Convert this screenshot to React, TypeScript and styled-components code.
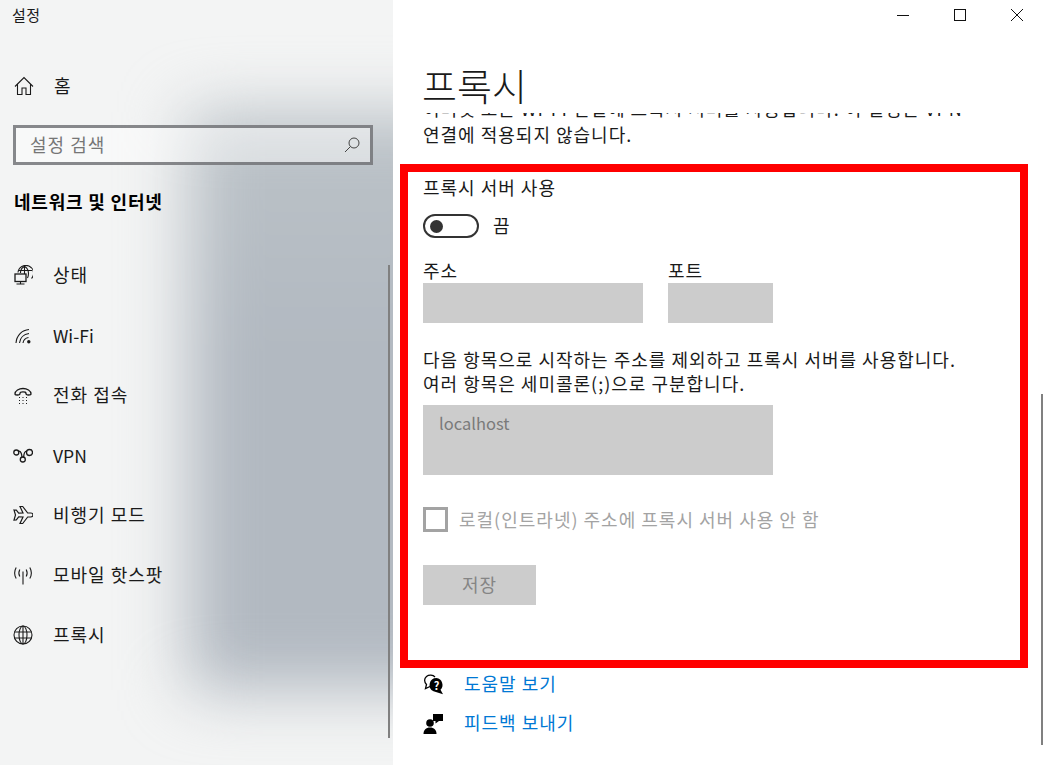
import React from 'react';
import styled, { createGlobalStyle } from 'styled-components';

const GlobalStyle = createGlobalStyle`
  html, body {
    margin: 0;
    padding: 0;
    background: #fff;
    overflow: hidden;
  }
  * {
    box-sizing: border-box;
  }
  body {
    font-family: "Noto Sans CJK KR", "Noto Sans", sans-serif;
    color: #1a1a1a;
    font-size: 18px;
    letter-spacing: 1px;
  }
`;

const Window = styled.div`
  display: grid;
  grid-template-columns: 393px 1fr;
  width: 1043px;
  height: 765px;
  overflow: hidden;
`;

const Sidebar = styled.aside`
  position: relative;
  height: 765px;
  overflow: hidden;
  background: #f3f4f4;
`;

// the blurred desktop wallpaper seen through the acrylic pane
const Acrylic = styled.div`
  position: absolute;
  left: 188px;
  top: 112px;
  width: 280px;
  height: 578px;
  background: linear-gradient(#bcc3c8, #b2b9c1 40%, #b2b9c1);
  filter: blur(32px);
`;

const SidebarBody = styled.div`
  position: relative;
  display: flex;
  flex-direction: column;
  height: 100%;
`;

const AppTitle = styled.div`
  padding: 5px 0 0 12px;
  height: 56px;
  font-size: 15px;
  letter-spacing: 0.4px;
  line-height: 20px;
`;

// Noto sits a little lower than the reference's font next to icons
const Label = styled.span`
  margin-top: -2px;
`;

const HomeRow = styled.div`
  display: flex;
  align-items: center;
  gap: 20px;
  height: 60px;
  padding-left: 14px;
`;

const SearchBox = styled.div`
  display: flex;
  align-items: center;
  justify-content: space-between;
  margin: 9px 0 0 13px;
  width: 360px;
  height: 40px;
  padding: 0 10px 0 14px;
  border: 3px solid rgba(90, 92, 96, 0.72);
  background: rgba(255, 255, 255, 0.45);
  color: #767676;
`;

const SectionTitle = styled.div`
  margin: 24px 0 0 14px;
  height: 26px;
  letter-spacing: 0.8px;
  line-height: 24px;
  font-weight: 700;
  color: #000;
`;

const NavList = styled.nav`
  display: flex;
  flex-direction: column;
  margin-top: 30px;
`;

const NavItem = styled.div`
  display: flex;
  align-items: center;
  gap: 20px;
  height: 60px;
  padding-left: 13px;
`;

const LatinLabel = styled.span`
  font-size: 17.5px;
  letter-spacing: 0;
`;

const NavIcon = styled.svg`
  flex: none;
  width: 20px;
  height: 20px;
  fill: none;
  stroke: #1a1a1a;
  stroke-width: 1.1;
`;

const Scrollbar = styled.div<{ $left: number; $top: number; $height: number }>`
  position: absolute;
  left: ${(p) => p.$left}px;
  top: ${(p) => p.$top}px;
  width: 2px;
  height: ${(p) => p.$height}px;
  background: #808080;
`;

const Main = styled.main`
  position: relative;
  display: flex;
  flex-direction: column;
  padding-left: 7px;
  height: 765px;
  overflow: hidden;
  background: #fff;
`;

const TitleBar = styled.div`
  display: flex;
  justify-content: flex-end;
  height: 30px;
  padding-right: 19px;
  margin-left: -7px;
`;

const WinButton = styled.svg`
  width: 14px;
  height: 14px;
  margin: 8px 0 0 43px;
  fill: none;
  stroke: #111;
  stroke-width: 1;
`;

const PageTitle = styled.h1`
  margin: 30px 0 0 22px;
  height: 53px;
  font-size: 38px;
  letter-spacing: 0;
  line-height: 50px;
  font-weight: 300;
  color: #1a1a1a;
`;

const ClippedLine = styled.div`
  display: flex;
  align-items: flex-end;
  height: 7px;
  margin-left: 23px;
  overflow: hidden;
  line-height: 24px;
  white-space: nowrap;
`;

const Intro = styled.p`
  margin: 1px 0 0 23px;
  height: 33px;
  line-height: 26px;
`;

const RedFrame = styled.section`
  display: flex;
  flex-direction: column;
  width: 628px;
  height: 504px;
  margin-top: 10px;
  padding: 3px 0 0 15px;
  border: 8px solid #ff0000;
`;

const FieldTitle = styled.div`
  height: 24px;
  line-height: 24px;
`;

const ToggleRow = styled.div`
  display: flex;
  align-items: center;
  gap: 14px;
  height: 24px;
  margin-top: 15px;
`;

const ToggleTrack = styled.div`
  display: flex;
  align-items: center;
  width: 56px;
  height: 24px;
  padding-left: 5px;
  border: 2px solid #333;
  border-radius: 12px;
`;

const ToggleKnob = styled.div`
  width: 13px;
  height: 13px;
  border-radius: 50%;
  background: #333;
`;

const AddressRow = styled.div`
  display: flex;
  gap: 25px;
  margin-top: 20px;
`;

const FieldLabel = styled.div`
  height: 25px;
  line-height: 24px;
`;

const DisabledInput = styled.div<{ $width: number; $height: number }>`
  width: ${(p) => p.$width}px;
  height: ${(p) => p.$height}px;
  padding: 5px 16px;
  background: #cccccc;
  color: #7a7a7a;
  font-size: 16.5px;
  letter-spacing: 0;
  line-height: 26px;
`;

const Description = styled.p`
  margin: 24px 0 0;
  line-height: 24px;
  white-space: nowrap;
`;

const TextAreaBox = styled(DisabledInput)`
  margin-top: 10px;
`;

const CheckRow = styled.div`
  display: flex;
  align-items: center;
  gap: 11px;
  margin-top: 32px;
  color: #a3a3a3;
  white-space: nowrap;
`;

const CheckBox = styled.div`
  flex: none;
  width: 25px;
  height: 25px;
  border: 3px solid #a3a3a3;
`;

const SaveButton = styled.div`
  display: flex;
  align-items: center;
  justify-content: center;
  width: 113px;
  height: 40px;
  margin-top: 33px;
  background: #cccccc;
  color: #858585;
`;

const HelpLinks = styled.div`
  display: flex;
  flex-direction: column;
  gap: 9px;
  margin: 1px 0 0 23px;
`;

const HelpLink = styled.a`
  display: flex;
  align-items: center;
  gap: 20px;
  height: 30px;
  color: #0078d4;
`;

const HelpIcon = styled.svg`
  flex: none;
  width: 21px;
  height: 21px;
  fill: #000;
`;

const navItems: { label: string; latin?: boolean; icon: React.ReactNode }[] = [
  {
    label: '상태',
    icon: (
      <>
        <path d="M5 7.500A7.800 7.800 0 1 1 18.500 13.500" />
        <path d="M5.500 5.500h13.500M7.500 8V7c.3-2.500 1.500-4.500 4-5.800C14.500 3 15.500 6 15.500 8.500c0 1.500-.3 3-1 4.500M11.500 1.200V9" />
        <rect x="2" y="9" width="11" height="7.500" fill="#f3f4f4" strokeWidth="1.300" />
        <path d="M7.500 16.500v2.500M3.500 19h8" />
      </>
    ),
  },
  {
    label: 'Wi-Fi',
    latin: true,
    icon: (
      <>
        <path d="M3 18C3.500 10.500 9 5 16 4.500" />
        <path d="M6.500 18c.5-5 4.200-8.800 9.500-9.500" />
        <path d="M10 18c.4-2.800 2.500-5 5.500-5.500" />
        <circle cx="15.800" cy="16.700" r="1.700" fill="#1a1a1a" stroke="none" />
      </>
    ),
  },
  {
    label: '전화 접속',
    icon: (
      <>
        <path
          d="M2 9C2 5.500 6 3.500 10 3.500s8 2 8 5.500c0 1-1 1-2.500 1s-2.500 0-2.500-1.500C13 7.200 12 6.800 10 6.800S7 7.200 7 8.500C7 10 6 10 4.500 10S2 10 2 9z"
          strokeWidth="1.300"
        />
        <path
          d="M6 12.500h1M9.500 12.500h1M13 12.500h1M6 15.500h1M9.500 15.500h1M13 15.500h1M6 18.500h1M9.500 18.500h1M13 18.500h1"
          strokeWidth="1.200"
        />
      </>
    ),
  },
  {
    label: 'VPN',
    latin: true,
    icon: (
      <g strokeWidth="1.300">
        <circle cx="3.300" cy="7.500" r="2.500" />
        <circle cx="16.500" cy="7.500" r="3" />
        <circle cx="9.800" cy="14.500" r="2.500" />
        <path d="M5.500 6.200c2.500-.5 3.300 3.300 3.500 6M13.800 6.200c-2-.1-3 3.300-3.200 6" />
      </g>
    ),
  },
  {
    label: '비행기 모드',
    icon: (
      <path
        d="M1 5l2.300.2 2.400 3 4.300-.2L7 1.500h2.700l5 6.500h3c1.500 0 2.300.9 2.300 2s-.8 2-2.300 2h-3l-5 6.500H7L10 12l-4.300-.2-2.400 3L1 15l1.500-5z"
        strokeWidth="1.200"
      />
    ),
  },
  {
    label: '모바일 핫스팟',
    icon: (
      <>
        <path d="M10 6.500V19.500" />
        <path d="M6.800 4.500c-1.200 2.200-1.200 4.800 0 7M13.200 4.500c1.200 2.200 1.200 4.800 0 7" />
        <path d="M3.200 2.500c-2 3.500-2 7.500 0 11M16.800 2.500c2 3.500 2 7.500 0 11" />
      </>
    ),
  },
  {
    label: '프록시',
    icon: (
      <>
        <circle cx="10" cy="10" r="9" />
        <ellipse cx="10" cy="10" rx="4" ry="9" />
        <path d="M10 1v18M1.500 7h17M1.500 13h17" />
      </>
    ),
  },
];

export default function App() {
  return (
    <>
      <GlobalStyle />
      <Window>
        <Sidebar>
          <Acrylic />
          <SidebarBody>
            <AppTitle>설정</AppTitle>
            <HomeRow>
              <NavIcon viewBox="0 0 20 20">
                <path d="M1 10.500 10 1.500l9 9M3.500 8.500V18.500h4.500v-6.500h4v6.500h4.500V8.500" />
              </NavIcon>
              <Label>홈</Label>
            </HomeRow>
            <SearchBox>
              <Label>설정 검색</Label>
              <svg width="16" height="18" viewBox="0 0 16 18" fill="none" stroke="#444" strokeWidth="1">
                <circle cx="10" cy="7" r="5" />
                <path d="M6.500 10.500 1 16" />
              </svg>
            </SearchBox>
            <SectionTitle>네트워크 및 인터넷</SectionTitle>
            <NavList>
              {navItems.map((item) => (
                <NavItem key={item.label}>
                  <NavIcon viewBox="0 0 20 20">{item.icon}</NavIcon>
                  {item.latin ? <LatinLabel>{item.label}</LatinLabel> : <Label>{item.label}</Label>}
                </NavItem>
              ))}
            </NavList>
          </SidebarBody>
          <Scrollbar $left={388} $top={265} $height={473} />
        </Sidebar>
        <Main>
          <TitleBar>
            <WinButton viewBox="0 0 14 14">
              <path d="M1 7.500h12" />
            </WinButton>
            <WinButton viewBox="0 0 14 14">
              <rect x="1.500" y="1.500" width="11" height="11" />
            </WinButton>
            <WinButton viewBox="0 0 14 14">
              <path d="M1 1l12 12M13 1 1 13" />
            </WinButton>
          </TitleBar>
          <PageTitle>프록시</PageTitle>
          <ClippedLine>이더넷 또는 Wi-Fi 연결에 프록시 서버를 사용합니다. 이 설정은 VPN</ClippedLine>
          <Intro>연결에 적용되지 않습니다.</Intro>
          <RedFrame>
            <FieldTitle>프록시 서버 사용</FieldTitle>
            <ToggleRow>
              <ToggleTrack>
                <ToggleKnob />
              </ToggleTrack>
              <Label>끔</Label>
            </ToggleRow>
            <AddressRow>
              <div>
                <FieldLabel>주소</FieldLabel>
                <DisabledInput $width={220} $height={40} />
              </div>
              <div>
                <FieldLabel>포트</FieldLabel>
                <DisabledInput $width={105} $height={40} />
              </div>
            </AddressRow>
            <Description>
              다음 항목으로 시작하는 주소를 제외하고 프록시 서버를 사용합니다.
              <br />
              여러 항목은 세미콜론(;)으로 구분합니다.
            </Description>
            <TextAreaBox $width={350} $height={70}>
              localhost
            </TextAreaBox>
            <CheckRow>
              <CheckBox />
              <Label>로컬(인트라넷) 주소에 프록시 서버 사용 안 함</Label>
            </CheckRow>
            <SaveButton>
              <Label>저장</Label>
            </SaveButton>
          </RedFrame>
          <HelpLinks>
            <HelpLink>
              <HelpIcon viewBox="0 0 21 21">
                <path
                  d="M7 12.500 2.500 14.500 3.500 10.500C1 8 1 4.500 3.500 2.500 6 .5 10 .8 12 3"
                  fill="none"
                  stroke="#000"
                  strokeWidth="1.300"
                />
                <path d="M13.500 4a7 7 0 0 0-3 13.300l9.500 3-2.500-4.500A7 7 0 0 0 13.500 4z" />
                <text x="13.500" y="15.500" fontSize="11" fontWeight="700" fill="#fff" textAnchor="middle" letterSpacing="0">
                  ?
                </text>
              </HelpIcon>
              <Label>도움말 보기</Label>
            </HelpLink>
            <HelpLink>
              <HelpIcon viewBox="0 0 21 21">
                <circle cx="7" cy="10" r="3.800" />
                <path d="M0.500 21c0-4 2.500-6.500 6.500-6.500s6.500 2.500 6.500 6.500z" />
                <path d="M10 1H20v7h-4L12.500 10.500V8H10z" />
              </HelpIcon>
              <Label>피드백 보내기</Label>
            </HelpLink>
          </HelpLinks>
          <Scrollbar $left={648} $top={394} $height={351} />
        </Main>
      </Window>
    </>
  );
}
